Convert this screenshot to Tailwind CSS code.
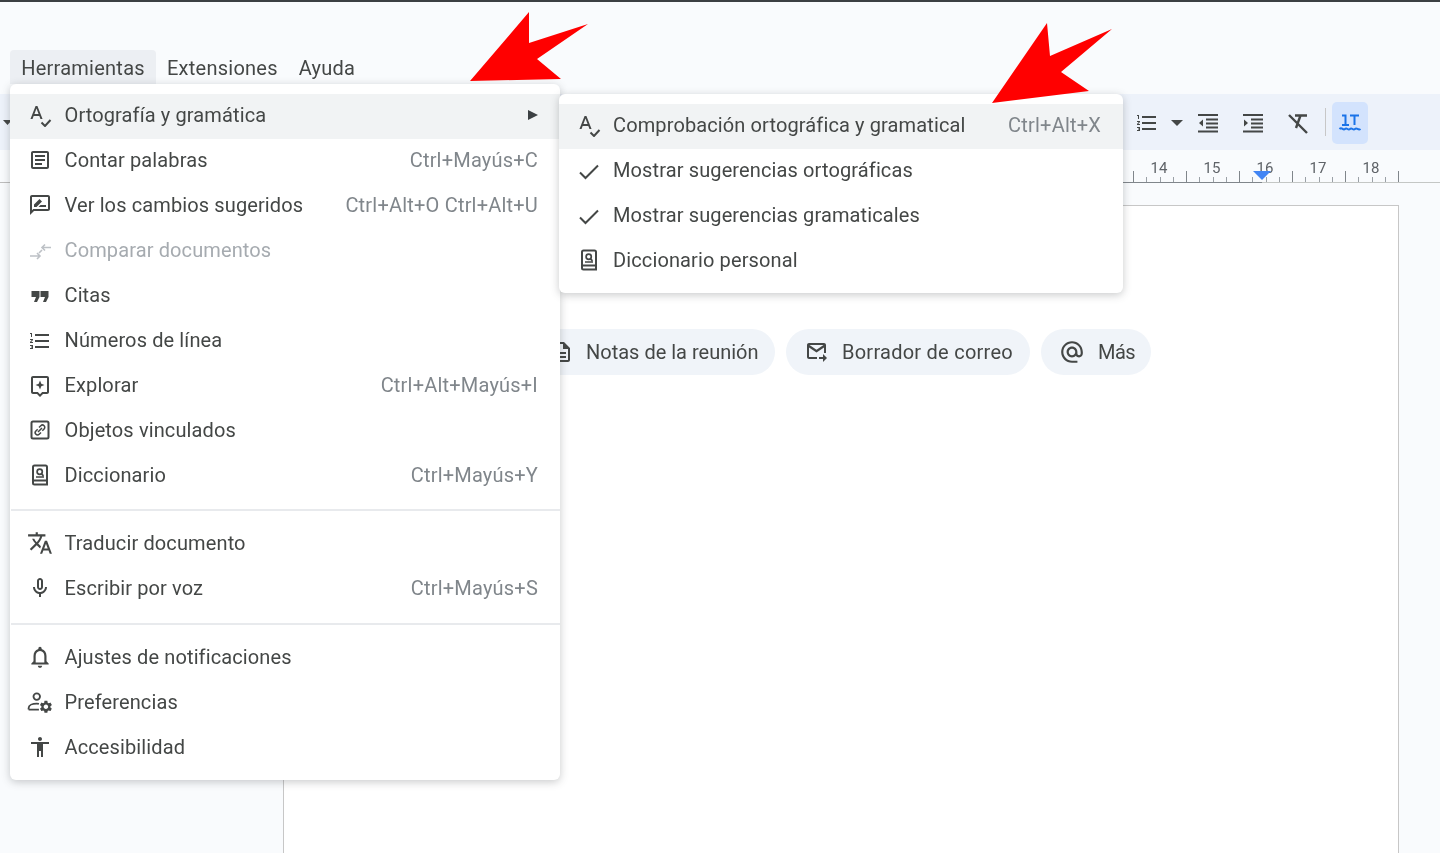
<!DOCTYPE html>
<html lang="es">
<head>
<meta charset="UTF-8">
<title>Herramientas</title>
<script src="https://cdn.jsdelivr.net/npm/@tailwindcss/browser@4"></script>
</head>
<body class="m-0 bg-[#f9fbfd] font-['Roboto',sans-serif] text-[#444746] text-[20px] tracking-[0.12px] overflow-hidden">
<div class="relative w-[1440px] h-[853px] overflow-hidden flex flex-col blur-[0.35px]">

  <!-- barra superior -->
  <div class="h-[2px] bg-[#3c4043] shrink-0"></div>

  <!-- menu -->
  <div class="h-[92px] shrink-0 flex items-end pl-[10px] pb-[10px] tracking-[0.25px]">
    <div class="h-[34px] w-[146px] bg-[#eceff3] rounded-t-[4px] flex items-center justify-center pt-[2px]">Herramientas</div>
    <div class="h-[34px] flex items-center ml-[11px] pt-[2px]">Extensiones</div>
    <div class="h-[34px] flex items-center ml-[21px] pt-[2px]">Ayuda</div>
  </div>

  <!-- toolbar -->
  <div class="h-[56px] shrink-0 bg-[#edf2fa] relative flex items-center pl-[1135px]">
    <svg class="absolute left-[3px] top-[26px]" width="9" height="5" viewBox="0 0 9 5"><path d="M0 0h9L4.500 5z" fill="#444746"/></svg>
    <svg class="w-6 h-6 mt-[2px]" viewBox="0 0 24 24" fill="#444746"><path d="M2 17h2v.5H3v1h1v.5H2v1h3v-4H2v1zm1-9h1V4H2v1h1v3zm-1 3h1.800L2 13.100v.9h3v-1H3.200L5 10.900V10H2v1zm5-6v2h14V5H7zm0 14h14v-2H7v2zm0-6h14v-2H7v2z"/></svg>
    <svg class="ml-[12px] mt-[2px]" width="12" height="6" viewBox="0 0 12 6"><path d="M0 0h12L6 6z" fill="#444746"/></svg>
    <svg class="w-6 h-6 ml-[13px] mt-[2px]" viewBox="0 0 24 24" fill="#444746"><path d="M2 3h20v2H2zM10 7.500h12v2H10zM10 11.500h12v2H10zM10 15.500h12v2H10zM2 19.500h20v2H2zM7 8.500v7l-4-3.500z"/></svg>
    <svg class="w-6 h-6 ml-[21px] mt-[2px]" viewBox="0 0 24 24" fill="#444746"><path d="M2 3h20v2H2zM10 7.500h12v2H10zM10 11.500h12v2H10zM10 15.500h12v2H10zM2 19.500h20v2H2zM3 8.500v7l4-3.500z"/></svg>
    <svg class="w-6 h-6 ml-[21px] mt-[2px]" viewBox="0 0 24 24" fill="none" stroke="#444746" stroke-width="2.400"><path d="M9 4.500h12M14.500 4.500 10 17M3 4l18 18"/></svg>
    <div class="w-px h-[28px] bg-[#c7c7c7] ml-[15px]"></div>
    <div class="w-[36px] h-[42px] bg-[#d3e3fd] rounded-[5px] ml-[6px] mt-[1px] flex items-center justify-center">
      <svg class="w-6 h-6" viewBox="0 0 24 24" fill="none" stroke="#1a73e8" stroke-width="2"><path d="M4 4.500h3.500V14M4 14h7M12 4.500h9M16.500 4.500V14M1.500 18c2.500-2.500 3.500 2 5.500 0s3 2 5 0 3 2 5 0 3 2 5.500 0"/></svg>
    </div>
  </div>

  <!-- regla -->
  <div class="h-[33px] shrink-0 relative">
    <svg class="absolute left-0 top-0" width="1440" height="33" viewBox="0 0 1440 33">
      <path d="M0 32.500h10" stroke="#bdbdbd" fill="none"/>
      <path d="M1123 32.500h139" stroke="#80868b" fill="none"/>
      <path d="M1262 32.500h178" stroke="#c4c7c5" fill="none"/>
      <path d="M1133.500 21v11M1186.500 21v11M1239.500 21v11M1292.500 21v11M1345.500 21v11M1398.500 21v11" stroke="#80868b" fill="none"/>
      <path d="M1146.500 27v5M1160.500 27v5M1173.500 27v5M1199.500 27v5M1213.500 27v5M1226.500 27v5M1252.500 27v5M1266.500 27v5M1279.500 27v5M1305.500 27v5M1319.500 27v5M1332.500 27v5M1358.500 27v5M1372.500 27v5M1385.500 27v5" stroke="#9aa0a6" fill="none"/>
    </svg>
    <div class="absolute left-[1149px] top-[9px] w-[20px] text-center text-[15px] leading-[18px] text-[#5f6368]">14</div>
    <div class="absolute left-[1202px] top-[9px] w-[20px] text-center text-[15px] leading-[18px] text-[#5f6368]">15</div>
    <div class="absolute left-[1255px] top-[9px] w-[20px] text-center text-[15px] leading-[18px] text-[#5f6368]">16</div>
    <div class="absolute left-[1308px] top-[9px] w-[20px] text-center text-[15px] leading-[18px] text-[#5f6368]">17</div>
    <div class="absolute left-[1361px] top-[9px] w-[20px] text-center text-[15px] leading-[18px] text-[#5f6368]">18</div>
    <svg class="absolute left-[1253px] top-[21px]" width="18" height="10" viewBox="0 0 18 10"><path d="M0 0h18L9 9z" fill="#4285f4"/></svg>
  </div>

  <!-- hoja -->
  <div class="flex-1 pt-[22px] pl-[283px]">
    <div class="w-[1116px] h-[700px] bg-white border border-[#c7c7c7] pt-[123px] pl-[244px] flex items-start gap-[11px]">
      <div class="h-[46px] w-[247px] rounded-full bg-[#f0f4f9] flex items-center pl-[22px] tracking-normal">
        <svg class="w-6 h-6 shrink-0" viewBox="0 0 24 24" fill="#444746"><path d="M14 2H6c-1.100 0-2 .9-2 2v16c0 1.100.9 2 2 2h12c1.100 0 2-.9 2-2V8l-6-6zm4 18H6V4h7v5h5v11zM8 12h8v2H8zm0 4h8v2H8z"/></svg>
        <span class="ml-[12px] whitespace-nowrap">Notas de la reunión</span>
      </div>
      <div class="h-[46px] w-[244px] rounded-full bg-[#f0f4f9] flex items-center pl-[18px] tracking-[0.25px]">
        <svg class="w-6 h-6 shrink-0" viewBox="0 0 24 24" fill="#444746"><path d="M3 5c0-1.100.9-2 2-2h15c1.100 0 2 .9 2 2v8h-2V7.500l-7.500 5L5 7.500V17h8v2H5c-1.100 0-2-.9-2-2V5zm2.500 0 7 4.800L19.500 5h-14z"/><path d="M15 17h4v-3l4 4-4 4v-3h-4z"/></svg>
        <span class="ml-[14px] whitespace-nowrap">Borrador de correo</span>
      </div>
      <div class="h-[46px] w-[110px] rounded-full bg-[#f0f4f9] flex items-center pl-[18px] tracking-[-0.5px]">
        <svg class="w-[26px] h-[26px] shrink-0" viewBox="0 0 24 24" fill="#444746"><path d="M12 2C6.480 2 2 6.480 2 12s4.480 10 10 10h5v-2h-5c-4.340 0-8-3.660-8-8s3.660-8 8-8 8 3.660 8 8v1.430c0 .79-.71 1.570-1.500 1.570s-1.500-.78-1.500-1.570V12c0-2.760-2.240-5-5-5s-5 2.240-5 5 2.240 5 5 5c1.380 0 2.640-.56 3.540-1.470.65.89 1.770 1.470 2.960 1.470 1.970 0 3.500-1.600 3.500-3.570V12c0-5.520-4.480-10-10-10zm0 13c-1.660 0-3-1.340-3-3s1.340-3 3-3 3 1.340 3 3-1.340 3-3 3z"/></svg>
        <span class="ml-[13px]">Más</span>
      </div>
    </div>
  </div>

  <!-- menu Herramientas -->
  <div class="absolute left-[10px] top-[84px] w-[550px] h-[696px] bg-white rounded-[6px] shadow-[0_2px_8px_rgba(60,64,67,0.28)] pt-[10px]">
    <div class="h-[45px] pb-[4px] bg-[#f1f3f4] flex items-center pl-[18px] pr-[22px]">
      <svg class="w-6 h-6 shrink-0" viewBox="0 0 24 24" fill="#444746"><path d="M12.450 16h2.090L9.430 3H7.570L2.460 16h2.090l1.120-3h5.640l1.140 3zm-6.020-5L8.500 5.480 10.570 11H6.430z"/><path d="M13.500 19.500l3.500 3.500 5.500-6" fill="none" stroke="#444746" stroke-width="2"/></svg>
      <span class="ml-[12.500px] flex-1">Ortografía y gramática</span>
      <svg width="10" height="10" viewBox="0 0 10 10"><path d="M0 0l10 5-10 5z" fill="#3c4043"/></svg>
    </div>
    <div class="h-[45px] pb-[4px] flex items-center pl-[18px] pr-[22px]">
      <svg class="w-6 h-6 shrink-0" viewBox="0 0 24 24" fill="#444746"><path d="M19 5v14H5V5h14m0-2H5c-1.100 0-2 .9-2 2v14c0 1.100.9 2 2 2h14c1.100 0 2-.9 2-2V5c0-1.100-.9-2-2-2zM14 17H7v-2h7v2zm3-4H7v-2h10v2zm0-4H7V7h10v2z"/></svg>
      <span class="ml-[12.500px] flex-1">Contar palabras</span>
      <span class="text-[#80868b] tracking-[0.2px]">Ctrl+Mayús+C</span>
    </div>
    <div class="h-[45px] pb-[4px] flex items-center pl-[18px] pr-[22px]">
      <svg class="w-6 h-6 shrink-0" viewBox="0 0 24 24" fill="#444746"><path d="M20 2H4c-1.100 0-2 .9-2 2v18l4-4h14c1.100 0 2-.9 2-2V4c0-1.100-.9-2-2-2zm0 14H5.170L4 17.170V4h16v12zM6 14h2.500L14 8.500 11.500 6 6 11.500zM18 14h-7.500l2-2H18z"/></svg>
      <span class="ml-[12.500px] flex-1">Ver los cambios sugeridos</span>
      <span class="text-[#80868b] tracking-[0.2px]">Ctrl+Alt+O Ctrl+Alt+U</span>
    </div>
    <div class="h-[45px] pb-[4px] flex items-center pl-[18px] pr-[22px]">
      <svg class="w-6 h-6 shrink-0" viewBox="0 0 24 24" fill="none" stroke="#bdc1c6" stroke-width="1.600"><path d="M2 18h10M9 15l3 3-3 3M23 9.500h-9M17 6.500l-3 3 3 3M11 15l3-3"/></svg>
      <span class="ml-[12.500px] flex-1 text-[#a6abb0]">Comparar documentos</span>
    </div>
    <div class="h-[45px] pb-[4px] flex items-center pl-[18px] pr-[22px]">
      <svg class="w-6 h-6 shrink-0 mt-[2px]" viewBox="0 0 24 24" fill="#444746"><path d="M3.500 7h8v6l-2.500 5H6l2-5H3.500zM12.500 7h8v6L18 18h-3l2-5h-4.500z"/></svg>
      <span class="ml-[12.500px] flex-1">Citas</span>
    </div>
    <div class="h-[45px] pb-[4px] flex items-center pl-[18px] pr-[22px]">
      <svg class="w-6 h-6 shrink-0 mt-[2px]" viewBox="0 0 24 24" fill="#444746"><path d="M2 17h2v.5H3v1h1v.5H2v1h3v-4H2v1zm1-9h1V4H2v1h1v3zm-1 3h1.800L2 13.100v.9h3v-1H3.200L5 10.900V10H2v1zm5-6v2h14V5H7zm0 14h14v-2H7v2zm0-6h14v-2H7v2z"/></svg>
      <span class="ml-[12.500px] flex-1">Números de línea</span>
    </div>
    <div class="h-[45px] pb-[4px] flex items-center pl-[18px] pr-[22px]">
      <svg class="w-6 h-6 shrink-0 mt-[2px]" viewBox="0 0 24 24" fill="#444746"><path d="M19 2H5c-1.100 0-2 .9-2 2v14c0 1.100.9 2 2 2h4l3 3 3-3h4c1.100 0 2-.9 2-2V4c0-1.100-.9-2-2-2zm0 16h-4.830L12 20.170 9.830 18H5V4h14v14z"/><path d="M12 6.500l1.300 3.200 3.200 1.300-3.200 1.300L12 15.500l-1.300-3.200L7.500 11l3.200-1.300z"/></svg>
      <span class="ml-[12.500px] flex-1">Explorar</span>
      <span class="text-[#80868b] tracking-[0.2px]">Ctrl+Alt+Mayús+I</span>
    </div>
    <div class="h-[45px] pb-[4px] flex items-center pl-[18px] pr-[22px]">
      <svg class="w-6 h-6 shrink-0" viewBox="0 0 24 24" fill="none" stroke="#444746" stroke-width="2"><rect x="3.500" y="3.500" width="17" height="17" rx="1.500"/><path stroke-width="1.500" d="M11 9.500l1.800-1.800a2.300 2.300 0 0 1 3.300 3.300L14.300 12.800M13 14.500l-1.800 1.800a2.300 2.300 0 0 1-3.300-3.300L9.700 11.200M10 14l4-4"/></svg>
      <span class="ml-[12.500px] flex-1">Objetos vinculados</span>
    </div>
    <div class="h-[45px] pb-[4px] flex items-center pl-[18px] pr-[22px]">
      <svg class="w-6 h-6 shrink-0" viewBox="0 0 24 24" fill="none" stroke="#444746" stroke-width="2"><path d="M5 18V4a1.500 1.500 0 0 1 1.500-1.500h11A1.500 1.500 0 0 1 19 4v17.500H6.500A1.500 1.500 0 0 1 5 20zM5 17.500h14"/><circle cx="11.700" cy="8.800" r="2.600" stroke-width="1.700"/><path stroke-width="1.700" d="M13.500 10.800l2 2M8 14h8"/></svg>
      <span class="ml-[12.500px] flex-1">Diccionario</span>
      <span class="text-[#80868b] tracking-[0.2px]">Ctrl+Mayús+Y</span>
    </div>
    <div class="h-[2px] bg-[#e8eaed] mt-[10px] mb-[11px] ml-[1px]"></div>
    <div class="h-[45px] pb-[4px] flex items-center pl-[18px] pr-[22px]">
      <svg class="w-[26px] h-[26px] shrink-0 -ml-[1px]" viewBox="0 0 24 24" fill="#444746"><path d="M12.870 15.070l-2.540-2.510.03-.03c1.740-1.940 2.980-4.170 3.710-6.530H17V4h-7V2H8v2H1v1.990h11.170C11.500 7.920 10.440 9.750 9 11.350 8.070 10.320 7.300 9.190 6.690 8h-2c.73 1.630 1.730 3.170 2.980 4.560l-5.090 5.020L4 19l5-5 3.110 3.110.76-2.040zM18.500 10h-2L12 22h2l1.120-3h4.750L21 22h2l-4.500-12zm-2.620 7l1.620-4.330L19.120 17h-3.240z"/></svg>
      <span class="ml-[11.500px] flex-1">Traducir documento</span>
    </div>
    <div class="h-[45px] pb-[4px] flex items-center pl-[18px] pr-[22px]">
      <svg class="w-6 h-6 shrink-0" viewBox="0 0 24 24" fill="#444746"><path d="M12 14c1.660 0 3-1.340 3-3V5c0-1.660-1.340-3-3-3S9 3.340 9 5v6c0 1.660 1.340 3 3 3zm-1-9c0-.55.45-1 1-1s1 .45 1 1v6c0 .55-.45 1-1 1s-1-.45-1-1V5zM17 11c0 2.760-2.240 5-5 5s-5-2.240-5-5H5c0 3.530 2.610 6.430 6 6.920V21h2v-3.080c3.390-.49 6-3.390 6-6.920h-2z"/></svg>
      <span class="ml-[12.500px] flex-1">Escribir por voz</span>
      <span class="text-[#80868b] tracking-[0.2px]">Ctrl+Mayús+S</span>
    </div>
    <div class="h-[2px] bg-[#e8eaed] mt-[11px] mb-[11px] ml-[1px]"></div>
    <div class="h-[45px] pb-[4px] flex items-center pl-[18px] pr-[22px]">
      <svg class="w-[26px] h-[26px] shrink-0 -ml-[1px]" viewBox="0 0 24 24" fill="#444746"><path d="M12 22c1.100 0 2-.9 2-2h-4c0 1.100.9 2 2 2zm6-6v-5c0-3.070-1.630-5.640-4.500-6.320V4c0-.83-.67-1.500-1.500-1.500s-1.500.67-1.500 1.500v.68C7.640 5.360 6 7.920 6 11v5l-2 2v1h16v-1l-2-2zm-2 1H8v-6c0-2.480 1.510-4.500 4-4.500s4 2.020 4 4.500v6z"/></svg>
      <span class="ml-[11.500px] flex-1">Ajustes de notificaciones</span>
    </div>
    <div class="h-[45px] pb-[4px] flex items-center pl-[18px] pr-[22px]">
      <svg class="w-[26px] h-[26px] shrink-0 -ml-[1px]" viewBox="0 0 24 24" fill="#444746"><circle cx="9" cy="7" r="3" fill="none" stroke="#444746" stroke-width="1.700"/><path d="M1.500 19v-1.500c0-2.500 3.500-4 7.500-4 .7 0 1.300 0 2 .2M1.500 19H11" fill="none" stroke="#444746" stroke-width="1.700"/><path transform="translate(10.500 9.500) scale(0.58)" d="M19.140 12.940c.04-.3.06-.61.06-.94 0-.32-.02-.64-.07-.94l2.030-1.580c.18-.14.23-.41.12-.61l-1.920-3.320c-.12-.22-.37-.29-.59-.22l-2.390.96c-.5-.38-1.030-.7-1.620-.94l-.36-2.540c-.04-.24-.24-.41-.48-.41h-3.840c-.24 0-.43.17-.47.41l-.36 2.540c-.59.24-1.130.57-1.620.94l-2.390-.96c-.22-.08-.47 0-.59.22L2.740 8.870c-.12.21-.08.47.12.61l2.030 1.580c-.05.3-.09.63-.09.94s.02.64.07.94l-2.030 1.580c-.18.14-.23.41-.12.61l1.920 3.320c.12.22.37.29.59.22l2.390-.96c.5.38 1.030.7 1.620.94l.36 2.540c.05.24.24.41.48.41h3.840c.24 0 .44-.17.47-.41l.36-2.540c.59-.24 1.130-.56 1.620-.94l2.390.96c.22.08.47 0 .59-.22l1.920-3.320c.12-.22.07-.47-.12-.61l-2.010-1.580zM12 15.600c-1.980 0-3.600-1.620-3.600-3.600s1.620-3.600 3.600-3.600 3.600 1.620 3.600 3.600-1.620 3.600-3.600 3.600z"/></svg>
      <span class="ml-[11.500px] flex-1">Preferencias</span>
    </div>
    <div class="h-[45px] pb-[4px] flex items-center pl-[18px] pr-[22px]">
      <svg class="w-6 h-6 shrink-0" viewBox="0 0 24 24" fill="#444746"><path d="M12 2c1.100 0 2 .9 2 2s-.9 2-2 2-2-.9-2-2 .9-2 2-2zm9 7h-6v13h-2v-6h-2v6H9V9H3V7h18v2z"/></svg>
      <span class="ml-[12.500px] flex-1">Accesibilidad</span>
    </div>
  </div>

  <!-- submenu -->
  <div class="absolute left-[559px] top-[94px] w-[564px] h-[199px] bg-white rounded-[6px] shadow-[0_2px_8px_rgba(60,64,67,0.28)] pt-[10px]">
    <div class="h-[45px] pb-[4px] bg-[#f1f3f4] flex items-center pl-[18px] pr-[22px]">
      <svg class="w-6 h-6 shrink-0" viewBox="0 0 24 24" fill="#444746"><path d="M12.450 16h2.090L9.430 3H7.570L2.460 16h2.090l1.120-3h5.640l1.140 3zm-6.020-5L8.500 5.480 10.570 11H6.430z"/><path d="M13.500 19.500l3.500 3.500 5.500-6" fill="none" stroke="#444746" stroke-width="2"/></svg>
      <span class="ml-[12px] flex-1">Comprobación ortográfica y gramatical</span>
      <span class="text-[#80868b] tracking-[0.2px]">Ctrl+Alt+X</span>
    </div>
    <div class="h-[45px] pb-[4px] flex items-center pl-[18px] pr-[22px]">
      <svg class="w-6 h-6 shrink-0 mt-[2px]" viewBox="0 0 24 24" fill="none" stroke="#444746" stroke-width="2"><path d="M3 13.500l5.500 5.500L21 6.500"/></svg>
      <span class="ml-[12px] flex-1">Mostrar sugerencias ortográficas</span>
    </div>
    <div class="h-[45px] pb-[4px] flex items-center pl-[18px] pr-[22px]">
      <svg class="w-6 h-6 shrink-0 mt-[2px]" viewBox="0 0 24 24" fill="none" stroke="#444746" stroke-width="2"><path d="M3 13.500l5.500 5.500L21 6.500"/></svg>
      <span class="ml-[12px] flex-1">Mostrar sugerencias gramaticales</span>
    </div>
    <div class="h-[45px] pb-[4px] flex items-center pl-[18px] pr-[22px]">
      <svg class="w-6 h-6 shrink-0" viewBox="0 0 24 24" fill="none" stroke="#444746" stroke-width="2"><path d="M5 18V4a1.500 1.500 0 0 1 1.500-1.500h11A1.500 1.500 0 0 1 19 4v17.500H6.500A1.500 1.500 0 0 1 5 20zM5 17.500h14"/><circle cx="11.700" cy="8.800" r="2.600" stroke-width="1.700"/><path stroke-width="1.700" d="M13.500 10.800l2 2M8 14h8"/></svg>
      <span class="ml-[12px] flex-1">Diccionario personal</span>
    </div>
  </div>

  <!-- flechas rojas -->
  <svg class="absolute left-0 top-0 pointer-events-none" width="1440" height="120" viewBox="0 0 1440 120">
    <path d="M470 81 529 12 529 43 588 24 537 59 561 79z" fill="#ff0000"/>
    <path d="M992 103 1047 23 1050 56 1112 29 1061 72 1089 91z" fill="#ff0000"/>
  </svg>
</div>
</body>
</html>
